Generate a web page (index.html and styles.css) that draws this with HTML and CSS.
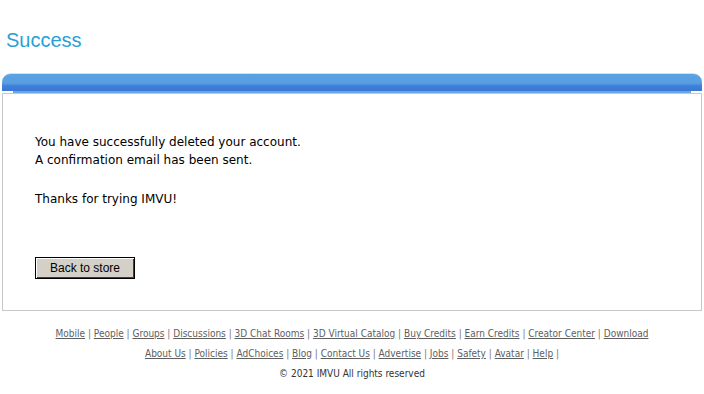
FILE: index.html
```html
<!DOCTYPE html>
<html lang="en">
<head>
    <meta charset="UTF-8">
    <title>Success</title>
    <link rel="stylesheet" href="styles.css">
</head>
<body>
    <h1 class="page-title">Success</h1>

    <div class="panel">
        <div class="panel-bar"></div>
        <div class="panel-line"></div>
        <div class="panel-body">
            <p>You have successfully deleted your account.<br>
            A confirmation email has been sent.</p>
            <p>Thanks for trying IMVU!</p>
            <button class="back-btn">Back to store</button>
        </div>
    </div>

    <footer class="footer">
        <div class="footer-links">
            <a href="#">Mobile</a> | <a href="#">People</a> | <a href="#">Groups</a> | <a href="#">Discussions</a> | <a href="#">3D Chat Rooms</a> | <a href="#">3D Virtual Catalog</a> | <a href="#">Buy Credits</a> | <a href="#">Earn Credits</a> | <a href="#">Creator Center</a> | <a href="#">Download</a>
        </div>
        <div class="footer-links">
            <a href="#">About Us</a> | <a href="#">Policies</a> | <a href="#">AdChoices</a> | <a href="#">Blog</a> | <a href="#">Contact Us</a> | <a href="#">Advertise</a> | <a href="#">Jobs</a> | <a href="#">Safety</a> | <a href="#">Avatar</a> | <a href="#">Help</a> |
        </div>
        <div class="copyright">&copy; 2021 IMVU All rights reserved</div>
    </footer>
</body>
</html>
```

FILE: styles.css
```css
body {
    margin: 0;
    padding: 0 2px;
    background-color: #ffffff;
    font-family: "DejaVu Sans", Verdana, sans-serif;
    color: #000000;
}

.page-title {
    margin: 0;
    padding: 30px 0 0 4px;
    height: 73px;
    box-sizing: border-box;
    font-family: "Liberation Sans", Arial, sans-serif;
    font-size: 20px;
    font-weight: normal;
    color: #2a9fd8;
    line-height: 20px;
}

.panel-bar {
    height: 17px;
    border-radius: 9px 9px 0 0;
    background: linear-gradient(to bottom, #5aa2e2 0%, #579fe0 55%, #3f7fda 70%, #3a78d6 100%);
    border-top: 1px solid #cfdff0;
}

.panel-line {
    height: 2px;
    margin: 0 11px 0 11px;
    background-color: #6aa6de;
}

.panel-body {
    border: 1px solid #c8c8c8;
    padding: 39px 32px 31px 32px;
    font-size: 12px;
    line-height: 18px;
}

.panel-body p {
    margin: 0 0 21px 0;
}

/* margins collapse with the paragraph above, so this is the full gap */
.back-btn {
    display: block;
    margin-top: 49px;
    width: 100px;
    height: 22px;
    padding: 0;
    font-family: "Liberation Sans", Arial, sans-serif;
    font-size: 12px;
    color: #000000;
    background-color: #d4d0c8;
    border: 1px solid #000000;
    box-shadow: inset 1px 1px 0 #ffffff, inset -1px -1px 0 #404040;
    border-radius: 0;
}

.footer {
    text-align: center;
    font-family: "DejaVu Sans Condensed", "Liberation Sans", sans-serif;
    font-size: 10px;
    color: #777777;
    padding-top: 13px;
}

.footer-links,
.copyright {
    line-height: 20px;
}

.footer a {
    color: #5e5e5e;
}

.copyright {
    color: #333333;
}
```
